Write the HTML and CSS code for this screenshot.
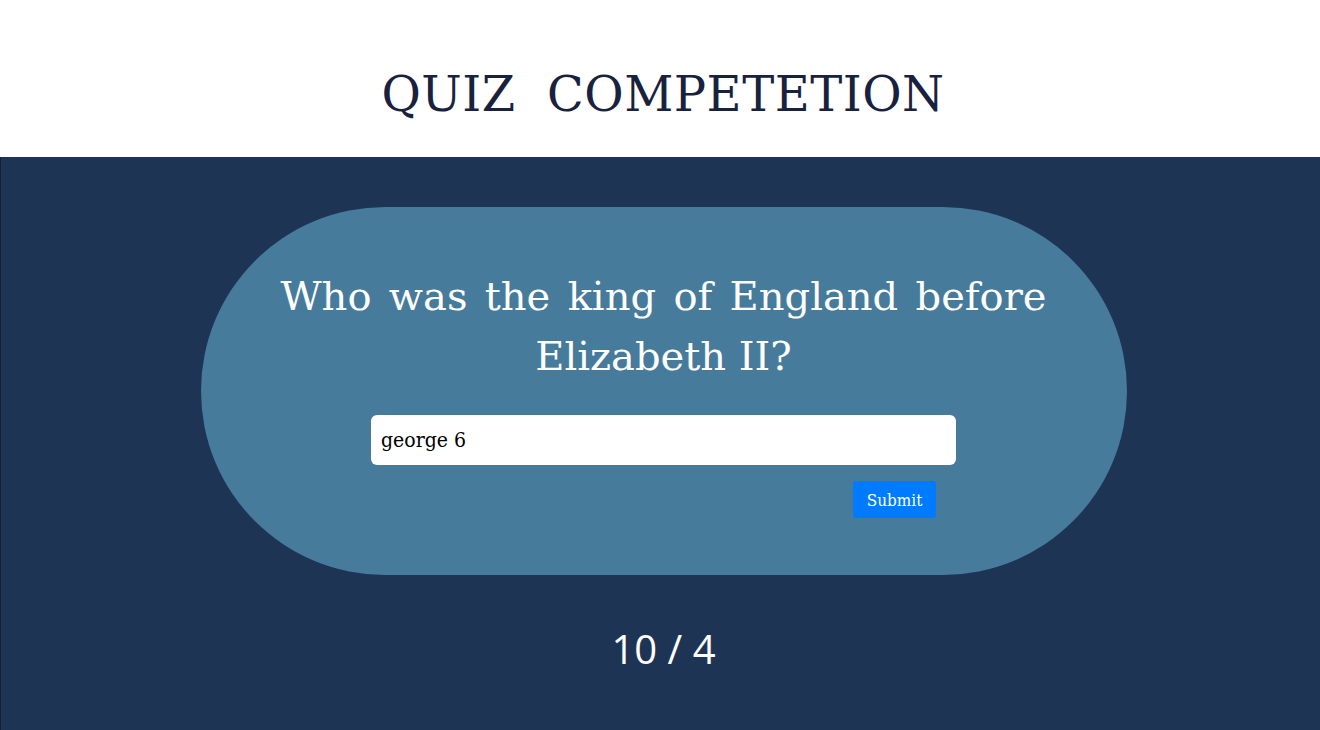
FILE: index.html
```html
<!DOCTYPE html>
<html>
<head>
<meta charset="utf-8">
<link rel="stylesheet" href="styles.css">
</head>
<body>
<header class="header">
  <h1 class="title">QUIZ&nbsp; COMPETETION</h1>
</header>
<main class="stage">
  <section class="card">
    <p class="question">Who was the king of England before Elizabeth II?</p>
    <form class="answer">
      <input class="answer-input" type="text" value="george 6">
      <div class="actions"><button class="submit" type="button">Submit</button></div>
    </form>
  </section>
  <div class="score">10 / 4</div>
</main>
</body>
</html>
```
FILE: styles.css
```css
html, body {
  margin: 0;
  padding: 0;
  height: 100%;
}
body {
  font-family: "DejaVu Serif", serif;
  background: #1e3455;
  overflow: hidden;
}
.header {
  background: #ffffff;
  height: 157px;
  display: flex;
  justify-content: center;
  padding-left: 6px;
  box-sizing: border-box;
}
.title {
  margin: 63px 0 0;
  font-family: "DejaVu Serif", serif;
  font-weight: normal;
  font-size: 48px;
  line-height: 62px;
  letter-spacing: 0.5px;
  color: #18213d;
}
.stage {
  background: #1e3455;
  border-left: 1px solid #1a1f2a;
  height: calc(100% - 157px);
  box-sizing: border-box;
  padding: 50px 0 0 6px;
  display: flex;
  flex-direction: column;
  align-items: center;
}
.card {
  width: 926px;
  height: 368px;
  flex: none;
  box-sizing: border-box;
  background: #467b9c;
  border-radius: 184px;
  padding: 59px 0 0;
  display: flex;
  flex-direction: column;
  align-items: center;
}
.question {
  margin: 0;
  width: 766px;
  color: #ffffff;
  font-family: "DejaVu Serif", serif;
  font-size: 40px;
  line-height: 60px;
  text-align: justify;
  text-align-last: center;
}
.answer {
  margin-top: 29px;
  width: 585px;
  display: flex;
  flex-direction: column;
}
.answer-input {
  height: 50px;
  box-sizing: border-box;
  border: none;
  border-radius: 6px;
  padding: 0 10px;
  font-family: "DejaVu Serif Condensed", "DejaVu Serif", serif;
  font-size: 21px;
  color: #000000;
  background: #ffffff;
  outline: none;
}
.actions {
  display: flex;
  justify-content: flex-end;
  padding-right: 20px;
  margin-top: 16px;
}
.submit {
  background: #007bff;
  color: #ffffff;
  border: none;
  border-radius: 3px;
  width: 83px;
  height: 37px;
  font-family: "DejaVu Serif Condensed", "DejaVu Serif", serif;
  font-size: 17px;
  padding: 0;
}
.score {
  margin-top: 46px;
  color: #ffffff;
  font-family: "Open Sans", sans-serif;
  font-size: 40px;
  line-height: 56px;
}
```
